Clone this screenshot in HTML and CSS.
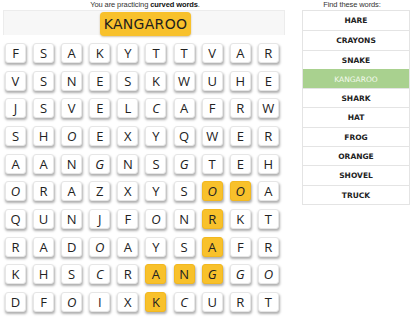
FILE: index.html
```html
<!DOCTYPE html>
<html>
<head>
<meta charset="utf-8">
<link rel="stylesheet" href="styles.css">
</head>
<body>
<div class="page">
  <div class="left">
    <div class="caption">You are practicing <b>curved words</b>.</div>
    <div class="target-box"><div class="target">KANGAROO</div></div>
    <div class="grid">
      <div class="tile">F</div><div class="tile">S</div><div class="tile">A</div><div class="tile">K</div><div class="tile">Y</div><div class="tile">T</div><div class="tile">T</div><div class="tile">V</div><div class="tile">A</div><div class="tile">R</div>
      <div class="tile">V</div><div class="tile">S</div><div class="tile">N</div><div class="tile">E</div><div class="tile">S</div><div class="tile">K</div><div class="tile">W</div><div class="tile">U</div><div class="tile">H</div><div class="tile">E</div>
      <div class="tile">J</div><div class="tile">S</div><div class="tile">V</div><div class="tile">E</div><div class="tile">L</div><div class="tile i">C</div><div class="tile">A</div><div class="tile">F</div><div class="tile">R</div><div class="tile">W</div>
      <div class="tile">S</div><div class="tile">H</div><div class="tile i">O</div><div class="tile">E</div><div class="tile">X</div><div class="tile">Y</div><div class="tile">Q</div><div class="tile">W</div><div class="tile">E</div><div class="tile">R</div>
      <div class="tile">A</div><div class="tile">A</div><div class="tile">N</div><div class="tile i">G</div><div class="tile">N</div><div class="tile">S</div><div class="tile i">G</div><div class="tile">T</div><div class="tile">E</div><div class="tile">H</div>
      <div class="tile i">O</div><div class="tile">R</div><div class="tile">A</div><div class="tile">Z</div><div class="tile">X</div><div class="tile">Y</div><div class="tile">S</div><div class="tile on i">O</div><div class="tile on i">O</div><div class="tile">A</div>
      <div class="tile">Q</div><div class="tile">U</div><div class="tile">N</div><div class="tile">J</div><div class="tile">F</div><div class="tile i">O</div><div class="tile">N</div><div class="tile on">R</div><div class="tile">K</div><div class="tile">T</div>
      <div class="tile">R</div><div class="tile">A</div><div class="tile">D</div><div class="tile i">O</div><div class="tile">A</div><div class="tile">Y</div><div class="tile">S</div><div class="tile on">A</div><div class="tile">F</div><div class="tile">R</div>
      <div class="tile">K</div><div class="tile">H</div><div class="tile">S</div><div class="tile i">C</div><div class="tile">R</div><div class="tile on">A</div><div class="tile on">N</div><div class="tile on i">G</div><div class="tile i">G</div><div class="tile i">O</div>
      <div class="tile">D</div><div class="tile">F</div><div class="tile i">O</div><div class="tile">I</div><div class="tile">X</div><div class="tile on">K</div><div class="tile i">C</div><div class="tile">U</div><div class="tile">R</div><div class="tile">T</div>
    </div>
  </div>
  <div class="right">
    <div class="caption">Find these words:</div>
    <ul class="words">
      <li>HARE</li>
      <li>CRAYONS</li>
      <li>SNAKE</li>
      <li class="found">KANGAROO</li>
      <li>SHARK</li>
      <li>HAT</li>
      <li>FROG</li>
      <li>ORANGE</li>
      <li>SHOVEL</li>
      <li>TRUCK</li>
    </ul>
  </div>
</div>
</body>
</html>
```
FILE: styles.css
```css
html, body {
  margin: 0;
  padding: 0;
  background: #ffffff;
}
body {
  width: 414px;
  height: 320px;
  overflow: hidden;
  font-family: "Liberation Sans", Arial, sans-serif;
  color: #222;
}
.page {
  display: flex;
  align-items: flex-start;
}
.left {
  width: 290px;
  flex: none;
}
.caption {
  height: 10px;
  line-height: 10px;
  font-size: 7.5px;
  text-align: center;
  color: #333;
  letter-spacing: -0.1px;
}
.caption b {
  font-weight: bold;
  color: #111;
}
.target-box {
  margin-left: 3px;
  width: 282px;
  height: 25px;
  box-sizing: border-box;
  background: #f7f7f7;
  border: 1px solid #ececec;
  border-bottom: none;
  display: flex;
  justify-content: center;
  padding-top: 1px;
  padding-left: 3px;
}
.target {
  width: 91px;
  height: 24px;
  background: #f8c12b;
  border-radius: 4px;
  box-shadow: 0 1px 2px rgba(120, 80, 0, 0.35);
  font-family: "DejaVu Sans", sans-serif;
  font-size: 14px;
  letter-spacing: 0.3px;
  line-height: 24px;
  text-align: center;
  color: #1e1e1e;
}
.grid {
  margin: 8px 0 0 5px;
  display: grid;
  grid-template-columns: repeat(10, 21px);
  grid-auto-rows: 20px;
  column-gap: 7.1px;
  row-gap: 7.67px;
}
.tile {
  background: #ffffff;
  border-radius: 3px;
  border: 1px solid #e6e6e6;
  box-sizing: border-box;
  box-shadow: 0.5px 2px 2.5px rgba(0, 0, 0, 0.32);
  display: flex;
  align-items: center;
  justify-content: center;
  font-family: "Open Sans", sans-serif;
  font-size: 13px;
  font-weight: 400;
  color: #222;
}
.tile.i {
  font-style: italic;
}
.tile.on {
  background: #f8c12b;
  border-color: #f2b820;
}
.right {
  width: 124px;
  flex: none;
}
.words {
  list-style: none;
  margin: 0 4px 0 12px;
  padding: 0;
  border: 1px solid #e4e4e4;
  background: #fbfbfb;
}
.words li {
  height: 19.3px;
  line-height: 19.3px;
  box-sizing: border-box;
  border-top: 1px solid #e4e4e4;
  text-align: center;
  font-family: "DejaVu Sans", sans-serif;
  font-weight: bold;
  font-size: 7.5px;
  color: #222;
  background: #ffffff;
}
.words li:first-child {
  border-top: none;
}
.words li.found {
  background: #a9d18f;
  color: #f4faee;
  font-weight: normal;
  border-top-color: #a9d18f;
}
```
